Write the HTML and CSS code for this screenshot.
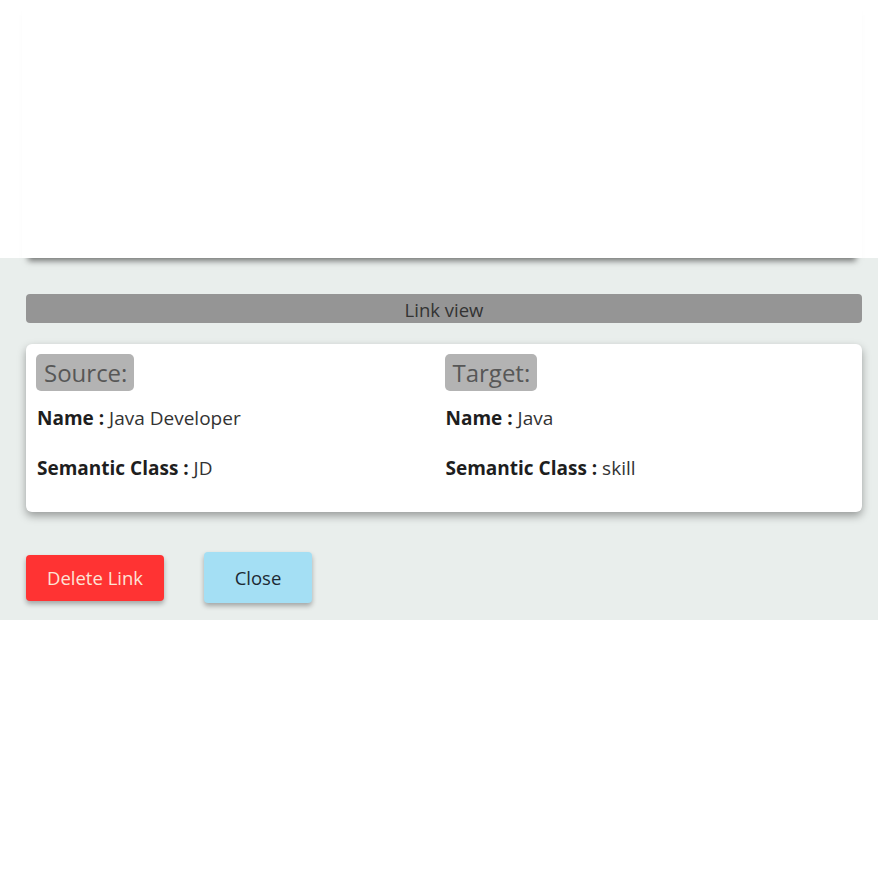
FILE: index.html
```html
<!DOCTYPE html>
<html>
<head>
<meta charset="utf-8">
<link rel="stylesheet" href="styles.css">
</head>
<body>
<div class="upper"><div class="top-card"></div></div>
<div class="panel">
  <div class="title-bar">Link view</div>
  <div class="link-card">
    <div class="col">
      <div class="badge">Source:</div>
      <p class="row"><b>Name :</b> Java Developer</p>
      <p class="row"><b>Semantic Class :</b> JD</p>
    </div>
    <div class="col">
      <div class="badge">Target:</div>
      <p class="row"><b>Name :</b> Java</p>
      <p class="row"><b>Semantic Class :</b> skill</p>
    </div>
  </div>
  <div class="actions">
    <button class="btn btn-delete">Delete Link</button>
    <button class="btn btn-close">Close</button>
  </div>
</div>
</body>
</html>
```
FILE: styles.css
```css
* { box-sizing: border-box; }
body {
  margin: 0;
  background: #ffffff;
  font-family: "Segoe UI", "Open Sans", "Noto Sans", sans-serif;
  color: #212121;
}
.upper {
  height: 258px;
  background: #fff;
  position: relative;
  z-index: 1;
}
.top-card {
  height: 258px;
  margin: 0 16px 0 22px;
  background: #fff;
  box-shadow: 0 9px 6px -6px rgba(0,0,0,0.5);
}
.panel {
  background: #e9eeec;
  height: 362px;
  padding: 36px 16px 0 26px;
}
.title-bar {
  height: 29px;
  background: #959595;
  border-radius: 4px;
  text-align: center;
  font-size: 18.5px;
  line-height: 31px;
  color: #333;
}
.link-card {
  margin-top: 21px;
  height: 168px;
  background: #fff;
  border-radius: 6px;
  box-shadow: 0 4px 8px rgba(0,0,0,0.35);
  display: flex;
  padding: 10px 10px 0 10px;
}
.col { flex: 1; }
.col + .col { padding-left: 1px; }
.badge {
  display: inline-block;
  background: #b3b3b3;
  color: #575757;
  border-radius: 5px;
  font-size: 24px;
  line-height: 38px;
  height: 37px;
  padding: 0 7px 0 8px;
}
.row {
  margin: 0;
  font-size: 19px;
  line-height: 24px;
  color: #333;
  padding-left: 1px;
}
.row b { color: #1e1e1e; font-weight: 700; }
.badge + .row { margin-top: 15px; }
.row + .row { margin-top: 26px; }
.actions {
  margin-top: 40px;
  display: flex;
  align-items: center;
  gap: 40px;
}
.btn {
  border: none;
  font-family: inherit;
  font-size: 18.5px;
  border-radius: 4px;
  box-shadow: 0 3px 5px rgba(0,0,0,0.3);
}
.btn-delete {
  width: 138px;
  height: 46px;
  background: #ff3333;
  color: #fde3d6;
}
.btn-close {
  width: 108px;
  height: 51px;
  background: #a4dff4;
  color: #1c2a33;
}
```
